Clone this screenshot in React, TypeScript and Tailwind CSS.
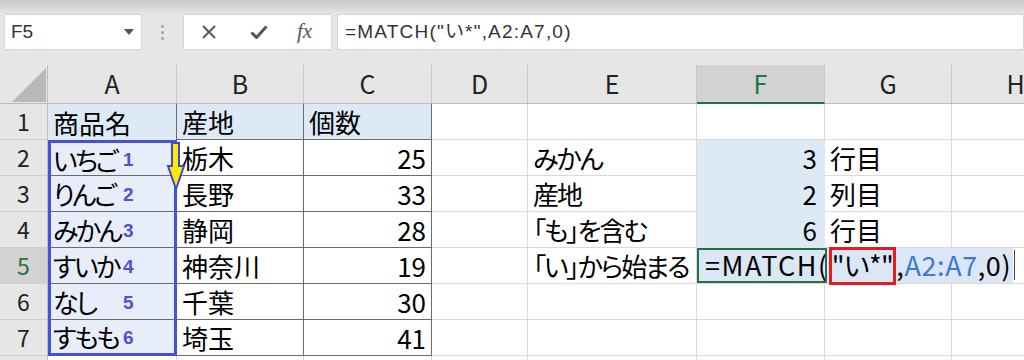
import React from 'react';

const letters = ['A', 'B', 'C', 'D', 'E', 'F', 'G', 'H'];

type Row = { a?: string; n?: number; b?: string; c?: string; e?: string; f?: string; g?: string };

const rows: Row[] = [
  { a: '商品名', b: '産地', c: '個数' },
  { a: 'いちご', n: 1, b: '栃木', c: '25', e: 'みかん', f: '3', g: '行目' },
  { a: 'りんご', n: 2, b: '長野', c: '33', e: '産地', f: '2', g: '列目' },
  { a: 'みかん', n: 3, b: '静岡', c: '28', e: '「も」を含む', f: '6', g: '行目' },
  { a: 'すいか', n: 4, b: '神奈川', c: '19', e: '「い」から始まる' },
  { a: 'なし', n: 5, b: '千葉', c: '30' },
  { a: 'すもも', n: 6, b: '埼玉', c: '41' },
  {},
];

const Arrow = () => (
  <svg className="absolute left-[112px] top-[-1px] z-20" width="26" height="50" viewBox="0 0 26 50">
    <polygon
      points="9,1 16,1 16,24 21,24 13,47 5,24 9,24"
      fill="#ffea00"
      stroke="#3d48d6"
      strokeWidth="2"
      strokeLinejoin="miter"
    />
  </svg>
);

const FormulaCell = () => (
  <>
    <div className="absolute left-0 top-0 z-10 flex h-full w-[316px] items-center bg-[#dbe7f5] pl-[8px] text-[27px] whitespace-nowrap">
      <span className="tracking-[1.5px]">=MATCH(</span>
      <span className="flex h-[38px] items-center border-[3px] border-[#e8191f] tracking-[-0.5px]">"い*"</span>
      <span className="tracking-[0.6px]">,</span>
      <span className="tracking-[0.6px] text-[#3c78d8]">A2:A7</span>
      <span className="tracking-[0.6px]">,0)</span>
    </div>
    <div className="absolute left-[317px] top-[2px] z-10 h-[30px] w-px bg-[#444]" />
    <div className="absolute left-0 top-0 z-20 h-full w-[130px] border-2 border-[#217346]" />
  </>
);

const App = () => {
  return (
    <div className="relative h-[360px] w-[1024px] overflow-hidden bg-[#e6e6e6] font-['Liberation_Sans','Noto_Sans_CJK_JP',sans-serif]">
      <div className="h-[14px] bg-linear-to-b from-[#c8c8c8] to-[#e6e6e6]" />

      <div className="flex h-[36px]">
        <div className="ml-[4px] flex w-[138px] items-center justify-between border border-[#d6d6d6] bg-white pl-[6px] pr-[7px]">
          <span className="text-[19px] text-[#333]">F5</span>
          <svg width="10" height="6" viewBox="0 0 10 6">
            <path d="M0 0h10L5 6z" fill="#555" />
          </svg>
        </div>
        <div className="flex w-[41px] flex-col items-center justify-center gap-[3px]">
          <div className="h-[3px] w-[3px] rounded-full bg-[#a0a0a0]" />
          <div className="h-[3px] w-[3px] rounded-full bg-[#a0a0a0]" />
          <div className="h-[3px] w-[3px] rounded-full bg-[#a0a0a0]" />
        </div>
        <div className="flex w-[149px] items-center border border-[#d6d6d6] bg-white pl-[17px]">
          <svg width="16" height="14" viewBox="0 0 16 14">
            <path d="M2 1l12 12M14 1L2 13" stroke="#555" strokeWidth="1.8" fill="none" />
          </svg>
          <svg className="ml-[33px]" width="18" height="14" viewBox="0 0 18 14">
            <path d="M1.5 7.5l5 5L16.5 1.5" stroke="#555" strokeWidth="3" fill="none" />
          </svg>
          <span className="ml-[29px] font-['Liberation_Serif',serif] text-[21px] italic text-[#555]">fx</span>
        </div>
        <div className="ml-[5px] flex flex-1 items-center border border-[#d6d6d6] bg-white pl-[7px]">
          <span className="text-[19px] tracking-[1.2px] text-[#333]">=MATCH("い*",A2:A7,0)</span>
        </div>
      </div>

      <div className="mt-[15px] grid w-max grid-cols-[48px_129px_127px_128px_96px_169px_128px_127px_128px] grid-rows-[39px_repeat(8,36px)] font-['Noto_Sans_CJK_JP',sans-serif] text-black [font-feature-settings:'palt']">
        <div className="relative border-r border-b border-[#bdbdbd] bg-[#e6e6e6]">
          <svg className="absolute left-0 top-0" width="48" height="39" viewBox="0 0 48 39">
            <polygon points="12,37 46,37 46,3" fill="#b9b9b9" />
          </svg>
        </div>
        {letters.map((l) =>
          l === 'F' ? (
            <div
              key={l}
              className="flex items-center justify-center border-r border-b-2 border-r-[#c6c6c6] border-b-[#217346] bg-[#d2d2d2] text-[25px] text-[#217346]"
            >
              {l}
            </div>
          ) : (
            <div
              key={l}
              className="flex items-center justify-center border-r border-b border-r-[#c6c6c6] border-b-[#bdbdbd] bg-[#e6e6e6] text-[25px] text-[#222]"
            >
              {l}
            </div>
          )
        )}

        {rows.map((r, i) => {
          const rn = i + 1;
          const inTable = rn <= 7;
          return (
            <React.Fragment key={rn}>
              <div
                className={
                  rn === 5
                    ? 'flex items-center justify-center border-r border-b border-r-[#bdbdbd] border-b-[#cfcfcf] bg-[#d2d2d2] text-[23px] text-[#217346]'
                    : 'flex items-center justify-center border-r border-b border-r-[#bdbdbd] border-b-[#cfcfcf] bg-[#e6e6e6] text-[23px] text-[#222]'
                }
              >
                {rn}
              </div>

              {/* A */}
              {rn === 1 ? (
                <div className="flex items-center border-r border-[#6b6b6b] bg-[#dde9f5] px-[5px] text-[26px]">{r.a}</div>
              ) : rn <= 7 ? (
                <div
                  className={
                    rn === 2
                      ? 'relative flex items-center border-x-[3px] border-t-[3px] border-b border-[#4650d8] border-b-[#6b6b6b] bg-[#e8eef9] pl-[2px] text-[26px]'
                      : rn === 7
                        ? 'relative flex items-center border-x-[3px] border-b-[3px] border-[#4650d8] bg-[#e8eef9] pl-[2px] text-[26px]'
                        : 'relative flex items-center border-x-[3px] border-b border-[#4650d8] border-b-[#6b6b6b] bg-[#e8eef9] pl-[2px] text-[26px]'
                  }
                >
                  <span className="w-[70px] whitespace-nowrap tracking-[-2.5px]">{r.a}</span>
                  <span className="mt-[3px] font-['Liberation_Sans',sans-serif] text-[19px] font-bold text-[#5050d8]">{r.n}</span>
                  {rn === 2 && <Arrow />}
                </div>
              ) : (
                <div className="border-r border-b border-[#dadada] bg-white" />
              )}

              {/* B */}
              <div
                className={
                  inTable
                    ? rn === 1
                      ? 'flex items-center border-r border-b border-[#6b6b6b] bg-[#dde9f5] px-[5px] text-[26px]'
                      : 'flex items-center border-r border-b border-[#6b6b6b] bg-white px-[5px] text-[26px]'
                    : 'border-r border-b border-[#dadada] bg-white'
                }
              >
                {r.b}
              </div>

              {/* C */}
              <div
                className={
                  inTable
                    ? rn === 1
                      ? 'flex items-center border-r border-b border-[#6b6b6b] bg-[#dde9f5] px-[5px] text-[26px]'
                      : 'flex items-center justify-end border-r border-b border-[#6b6b6b] bg-white px-[5px] text-[26px]'
                    : 'border-r border-b border-[#dadada] bg-white'
                }
              >
                {r.c}
              </div>

              {/* D */}
              <div className="border-r border-b border-[#dadada] bg-white" />

              {/* E */}
              <div className="flex items-center whitespace-nowrap border-r border-b border-[#dadada] bg-white px-[5px] text-[26px] tracking-[-2px]">
                {r.e}
              </div>

              {/* F */}
              {rn === 5 ? (
                <div className="relative border-r border-b border-[#dadada] bg-white">
                  <FormulaCell />
                </div>
              ) : (
                <div
                  className={
                    r.f
                      ? 'flex items-center justify-end border-r border-b border-r-[#dde9f5] border-b-[#dde9f5] bg-[#dde9f5] pr-[7px] text-[26px]'
                      : 'border-r border-b border-[#dadada] bg-white'
                  }
                >
                  {r.f}
                </div>
              )}

              {/* G */}
              <div className="flex items-center whitespace-nowrap border-r border-b border-[#dadada] bg-white px-[5px] text-[26px]">
                {r.g}
              </div>

              {/* H */}
              <div className="border-r border-b border-[#dadada] bg-white" />
            </React.Fragment>
          );
        })}
      </div>
    </div>
  );
};

export default App;
